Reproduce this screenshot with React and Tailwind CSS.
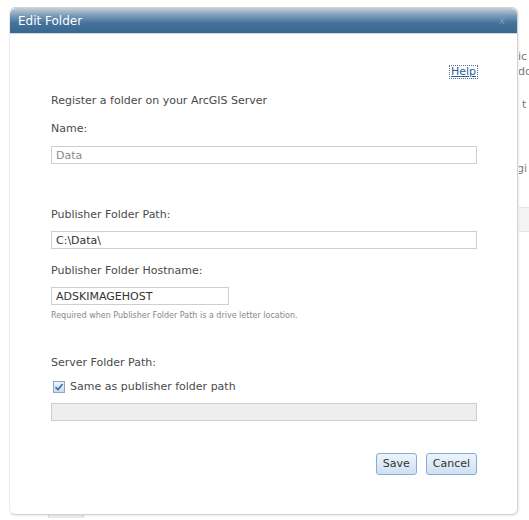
import { useState } from 'react'

function Field({ value, width = 'w-[426px]', muted = false, disabled = false }) {
  return (
    <div
      className={`${width} h-[18px] border border-[#cfcfcf] px-[4px] flex items-center text-[11px] leading-none ${
        disabled ? 'bg-[#eeeeee]' : 'bg-white'
      } ${muted ? 'text-[#8a8a8a]' : 'text-[#333]'}`}
    >
      {value}
    </div>
  )
}

function Label({ children, className = '' }) {
  return <div className={`text-[11px] leading-[14px] text-[#4a4a4a] ${className}`}>{children}</div>
}

export default function App() {
  const [same, setSame] = useState(true)

  return (
    <div className="relative w-[529px] h-[520px] bg-white overflow-hidden font-['DejaVu_Sans',Verdana,sans-serif]">
      {/* page underneath the dialog, only its right edge shows */}
      <div className="absolute left-[519px] top-0 w-[10px] h-full overflow-hidden text-[11px] text-[#777]">
        <div className="absolute top-[49px] -left-[1px] whitespace-nowrap">ic</div>
        <div className="absolute top-[64px] -left-[1px] whitespace-nowrap">do</div>
        <div className="absolute top-[97px] left-[3px] whitespace-nowrap">t</div>
        <div className="absolute top-[161px] -left-[2px] whitespace-nowrap">gi</div>
        <div className="absolute top-[207px] left-0 w-full h-[25px] bg-[#f4f4f4] border-y border-[#e6e6e6]" />
      </div>
      <div className="absolute left-[48px] top-[512px] w-[36px] h-[6px] bg-[#ececec] border-x border-[#dcdcdc]" />

      {/* dialog */}
      <div className="absolute left-[9px] top-[7px] w-[509px] h-[508px] flex flex-col rounded-[6px] border border-[#d2d2d2] border-l-[#ececec] bg-white shadow-[1px_1px_2px_rgba(0,0,0,0.08)]">
        <div className="h-[26px] shrink-0 rounded-t-[6px] bg-[linear-gradient(to_bottom,#c3cfdb_0%,#7b9cb9_30%,#44729a_60%,#376890_100%)] flex items-center justify-between pl-[8px] pr-[12px] border-b border-[#cbd6e0]">
          <span className="text-white text-[12px] leading-none">Edit Folder</span>
          <span className="text-[#7d9ab5] text-[10px] leading-none">x</span>
        </div>

        <div className="flex-1 flex flex-col pl-[41px] pr-[40px]">
          <div className="flex justify-end pt-[32px]">
            <a
              href="#"
              className="text-[11px] leading-[12px] text-[#28609a] underline outline-1 outline-dotted outline-[#5a6f86] px-[1px]"
            >
              Help
            </a>
          </div>

          <Label className="mt-[16px]">Register a folder on your ArcGIS Server</Label>
          <Label className="mt-[14px]">Name:</Label>
          <div className="mt-[10px]">
            <Field value="Data" muted />
          </div>

          <Label className="mt-[44px]">Publisher Folder Path:</Label>
          <div className="mt-[9px]">
            <Field value="C:\Data\" />
          </div>

          <Label className="mt-[15px]">Publisher Folder Hostname:</Label>
          <div className="mt-[9px]">
            <Field value="ADSKIMAGEHOST" width="w-[178px]" />
          </div>
          <div className="mt-[6px] text-[8px] leading-[10px] text-[#888]">
            Required when Publisher Folder Path is a drive letter location.
          </div>

          <Label className="mt-[35px]">Server Folder Path:</Label>
          <label className="mt-[10px] flex items-center gap-[5px] text-[11px] leading-[14px] text-[#4a4a4a] cursor-pointer">
            <span
              onClick={() => setSame(!same)}
              className="ml-[2px] w-[12px] h-[12px] border border-[#8fa7c0] bg-[linear-gradient(to_bottom,#eef4fa,#c7d9ec)] flex items-center justify-center"
            >
              {same && (
                <svg width="10" height="10" viewBox="0 0 10 10">
                  <path d="M1.5 5.2 L4 7.6 L8.6 2" fill="none" stroke="#2f6fb3" strokeWidth="1.6" />
                </svg>
              )}
            </span>
            Same as publisher folder path
          </label>
          <div className="mt-[9px]">
            <Field value="" disabled />
          </div>

          <div className="flex justify-end gap-[9px] mt-[32px]">
            <button className="h-[22px] px-[6px] rounded-[3px] border border-[#86aed4] bg-[linear-gradient(to_bottom,#edf4fb,#cfe0f2)] text-[11px] text-[#333]">
              Save
            </button>
            <button className="h-[22px] px-[6px] rounded-[3px] border border-[#86aed4] bg-[linear-gradient(to_bottom,#edf4fb,#cfe0f2)] text-[11px] text-[#333]">
              Cancel
            </button>
          </div>
        </div>
      </div>
    </div>
  )
}
